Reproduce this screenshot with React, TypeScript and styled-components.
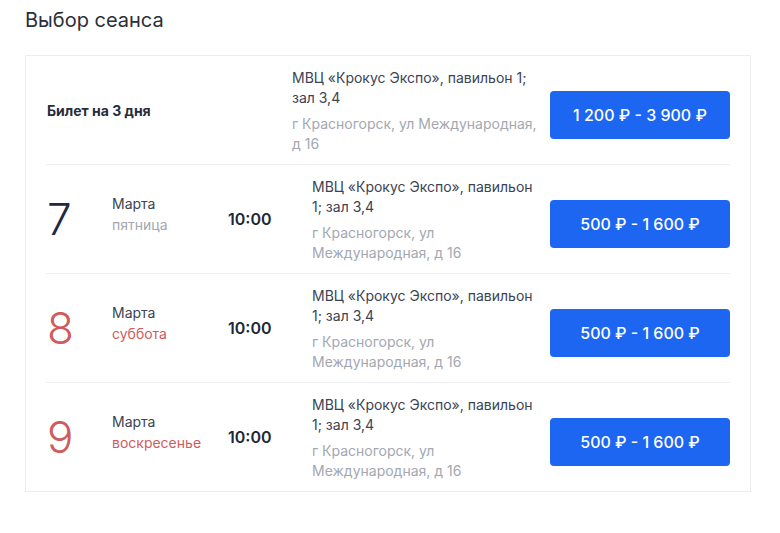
import React from "react";
import styled, { createGlobalStyle } from "styled-components";

const Global = createGlobalStyle`
  html, body { margin: 0; padding: 0; background: #ffffff; }
  body { font-family: Inter, "Noto Sans", "Liberation Sans", sans-serif; -webkit-font-smoothing: antialiased; }
  * { box-sizing: border-box; }
`;

const Page = styled.div`
  padding: 8px 30px 0 25px;
  width: 780px;
`;

const Title = styled.h1`
  margin: 0;
  font-size: 20px;
  line-height: 24px;
  font-weight: 400;
  color: #2a2f38;
`;

const Card = styled.div`
  margin-top: 23px;
  width: 726px;
  border: 1px solid #ededed;
  padding: 0 20px;
`;

const Row = styled.div<{ $first?: boolean }>`
  display: grid;
  grid-template-columns: ${(p) => (p.$first ? "246px 1fr 180px" : "66px 116px 84px 1fr 180px")};
  align-items: center;
  min-height: ${(p) => (p.$first ? "108px" : "109px")};
  border-top: ${(p) => (p.$first ? "none" : "1px solid #eceef1")};
`;

const TicketName = styled.div`
  font-size: 14px;
  font-weight: 700;
  color: #262c3a;
  padding-left: 1px;
`;

const DayNum = styled.div<{ $red?: boolean }>`
  font-size: 44px;
  line-height: 44px;
  font-weight: 300;
  color: ${(p) => (p.$red ? "#cf5c5c" : "#1e2942")};
  padding-left: 1px;
`;

const DateBlock = styled.div`
  display: flex;
  flex-direction: column;
  font-size: 14px;
  line-height: 21px;
  margin-bottom: 10px;
`;

const Month = styled.span`
  color: #3b4354;
`;

const Weekday = styled.span<{ $red?: boolean }>`
  color: ${(p) => (p.$red ? "#cf5c5c" : "#a2a7b0")};
`;

const Time = styled.div`
  font-size: 16px;
  font-weight: 600;
  color: #20273a;
`;

const Address = styled.div`
  padding-right: 8px;
  padding-top: 2px;
  font-size: 14px;
  line-height: 20px;
`;

const Venue = styled.div`
  color: #3b4354;
`;

const Street = styled.div`
  color: #a3a8b1;
  margin-top: 6px;
`;

const PriceButton = styled.button`
  width: 180px;
  height: 48px;
  margin-top: 10px;
  border: none;
  border-radius: 4px;
  background: #1c66f2;
  color: #ffffff;
  font-family: inherit;
  font-size: 16px;
  font-weight: 500;
  cursor: pointer;
`;

const days = [
  { num: "7", weekday: "пятница", red: false },
  { num: "8", weekday: "суббота", red: true },
  { num: "9", weekday: "воскресенье", red: true },
];

const AddressCell = () => (
  <Address>
    <Venue>МВЦ «Крокус Экспо», павильон 1; зал 3,4</Venue>
    <Street>г Красногорск, ул Международная, д 16</Street>
  </Address>
);

export default function App() {
  return (
    <>
      <Global />
      <Page>
        <Title>Выбор сеанса</Title>
        <Card>
          <Row $first>
            <TicketName>Билет на 3 дня</TicketName>
            <AddressCell />
            <PriceButton>1 200 ₽ - 3 900 ₽</PriceButton>
          </Row>
          {days.map((d) => (
            <Row key={d.num}>
              <DayNum $red={d.red}>{d.num}</DayNum>
              <DateBlock>
                <Month>Марта</Month>
                <Weekday $red={d.red}>{d.weekday}</Weekday>
              </DateBlock>
              <Time>10:00</Time>
              <AddressCell />
              <PriceButton>500 ₽ - 1 600 ₽</PriceButton>
            </Row>
          ))}
        </Card>
      </Page>
    </>
  );
}
